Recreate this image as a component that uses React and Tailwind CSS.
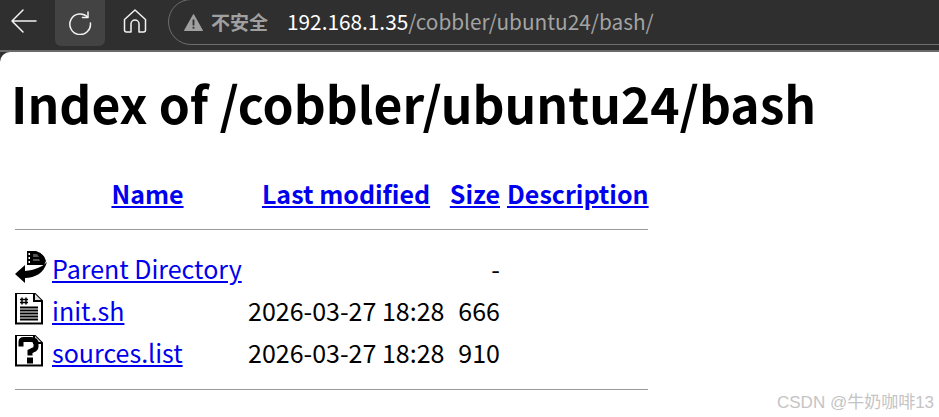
import React from 'react';

const FONT = 'font-["Noto_Sans_CJK_SC",sans-serif]';

const BackIcon = () => (
  <svg width="28" height="28" viewBox="0 0 28 28" fill="none" stroke="#f2f2f2" strokeWidth="1.5" strokeLinecap="round" strokeLinejoin="round">
    <path d="M2 14 H26 M2 14 L13 3 M2 14 L13 25" />
  </svg>
);

const ReloadIcon = () => (
  <svg width="24" height="24" viewBox="0 0 24 24" fill="none" stroke="#f2f2f2" strokeWidth="1.5" strokeLinecap="round" strokeLinejoin="round">
    <path d="M19.5 6 A10.3 10.3 0 1 0 22.4 12" />
    <path d="M20 1 V6.5 H14.5" />
  </svg>
);

const HomeIcon = () => (
  <svg width="24" height="26" viewBox="0 0 24 26" fill="none" stroke="#f2f2f2" strokeWidth="1.5" strokeLinejoin="round">
    <path d="M12 2 L22.5 11.5 V22 A2 2 0 0 1 20.5 24 H16 V16 A4 4 0 0 0 8 16 V24 H3.5 A2 2 0 0 1 1.5 22 V11.5 Z" />
  </svg>
);

const WarnIcon = () => (
  <svg width="19" height="17" viewBox="0 0 19 17">
    <path d="M9.5 0.5 L18.5 16.5 H0.5 Z" fill="#a0a0a0" stroke="#a0a0a0" strokeLinejoin="round" />
    <rect x="8.6" y="5.5" width="1.8" height="6" fill="#2f2f2f" />
    <rect x="8.6" y="12.8" width="1.8" height="1.8" fill="#2f2f2f" />
  </svg>
);

const BackDirIcon = () => (
  <svg width="33" height="34" viewBox="1 1 33 34">
    {/* film roll */}
    <path d="M13 1 L22 1 Q30 3 32 11 L30 15 L13 15 Z" fill="#000" />
    <path d="M14.5 3 h1.5 v2 h-1.5z M14.5 7 h1.5 v2 h-1.5z M14.5 11 h1.5 v2 h-1.5z" fill="#fff" />
    <path d="M19 4 h4 l2 3 h-6z M19 9 h6 l1 2 h-7z" fill="#555" />
    {/* curved arrow */}
    <path d="M11 15 L1 24 L11 33 V28 C21 28 30 23 33 12 C28 17 21 20 11 21 Z" fill="#000" />
  </svg>
);

const FileBase = ({ children }) => (
  <svg width="30" height="34" viewBox="1 1.5 30 34">
    <path d="M2 1.5 H20 L28 9.5 V32 H2 Z" fill="#fff" stroke="#000" strokeWidth="2" />
    <path d="M20 1.5 V9.5 H28" fill="#ddd" stroke="#000" strokeWidth="2" />
    <path d="M3.5 33 H28.5" stroke="#888" strokeWidth="1" />
    {children}
  </svg>
);

const TextFileIcon = () => (
  <FileBase>
    <path d="M8 6 V13 M12 6 V13 M6 8 H14 M6 11 H14" stroke="#000" strokeWidth="1.5" />
    <path d="M6 16 H24 M6 19 H24 M6 22 H24 M6 25 H24 M6 28 H24" stroke="#000" strokeWidth="1.8" />
  </FileBase>
);

const UnknownFileIcon = () => (
  <FileBase>
    <path d="M7 13 V8.5 Q7 6 10 6 H17 Q22 6 22 10 V13 Q22 15.5 19 16.5 L16 18 V22" fill="none" stroke="#000" strokeWidth="5" />
    <rect x="13" y="24" width="6" height="6" fill="#000" />
  </FileBase>
);

const rows = [
  { icon: <BackDirIcon />, name: 'Parent Directory', date: '', size: '-' },
  { icon: <TextFileIcon />, name: 'init.sh', date: '2026-03-27 18:28', size: '666' },
  { icon: <UnknownFileIcon />, name: 'sources.list', date: '2026-03-27 18:28', size: '910' },
];

const App = () => {
  return (
    <div className={`relative w-[939px] h-[417px] overflow-hidden bg-[#2f2f2f] ${FONT}`}>
      {/* Browser toolbar */}
      <div className="flex items-start h-[52px] border-b-2 border-[#6a6a6a]">
        <div className="w-[46px] h-[42px] shrink-0 flex items-center justify-center ml-[1px]">
          <BackIcon />
        </div>
        <div className="w-[50px] h-[46px] shrink-0 ml-[8px] flex items-center justify-center bg-[#434343] rounded-b-md">
          <ReloadIcon />
        </div>
        <div className="w-[50px] h-[42px] shrink-0 ml-[5px] flex items-center justify-center">
          <HomeIcon />
        </div>
        <div className="flex items-center h-[46px] -mt-[1px] ml-[8px] w-[800px] shrink-0 pl-[15px] border border-[#6e6e6e] rounded-l-[23px]">
          <WarnIcon />
          <span className="ml-[8px] text-[19px] font-bold text-[#a0a0a0]">不安全</span>
          <span className="ml-[19px] text-[20.8px] text-white">
            192.168.1.35<span className="text-[#a3a3a3]">/cobbler/ubuntu24/bash/</span>
          </span>
        </div>
      </div>

      {/* Page */}
      <div className="bg-white rounded-tl-[10px] h-[365px] pl-[11px] text-black">
        <h1 className="pt-[14px] text-[49.8px] leading-[72px] font-bold">Index of /cobbler/ubuntu24/bash</h1>
        <table className="mt-[33px] ml-[4px] w-[633px] table-fixed border-separate border-spacing-0 text-[25px] leading-[34px]">
          <thead>
            <tr className="h-[44px]">
              <th className="w-[38px]"></th>
              <th className="w-[195px] pr-[6px] text-center font-bold">
                <a href="#" className="text-[#0000ee] underline">Name</a>
              </th>
              <th className="w-[196px] text-center font-bold">
                <a href="#" className="text-[#0000ee] underline">Last modified</a>
              </th>
              <th className="w-[56px] text-right font-bold">
                <a href="#" className="text-[#0000ee] underline">Size</a>
              </th>
              <th className="w-[148px] pl-[7px] text-left font-bold">
                <a href="#" className="text-[#0000ee] underline">Description</a>
              </th>
            </tr>
            <tr>
              <th colSpan="5" className="pt-[14px] pb-[17px]">
                <div className="border-t border-[#999]"></div>
              </th>
            </tr>
          </thead>
          <tbody>
            {rows.map((row) => (
              <tr key={row.name} className="h-[42px]">
                <td className="align-middle">{row.icon}</td>
                <td className="whitespace-nowrap">
                  <a href="#" className="-ml-px text-[#0000ee] underline">{row.name}</a>
                </td>
                <td className="whitespace-nowrap">{row.date}</td>
                <td className="text-right">{row.size}</td>
                <td></td>
              </tr>
            ))}
            <tr>
              <td colSpan="5" className="pt-[16px]">
                <div className="border-t border-[#999]"></div>
              </td>
            </tr>
          </tbody>
        </table>
      </div>

      {/* CSDN watermark */}
      <div className='absolute left-[777px] top-[392px] font-["Liberation_Sans","Noto_Sans_CJK_SC",sans-serif] text-[17px] leading-[22px] text-[#c4c4c4] whitespace-nowrap'>
        CSDN @牛奶咖啡13
      </div>
    </div>
  );
};

export default App;
